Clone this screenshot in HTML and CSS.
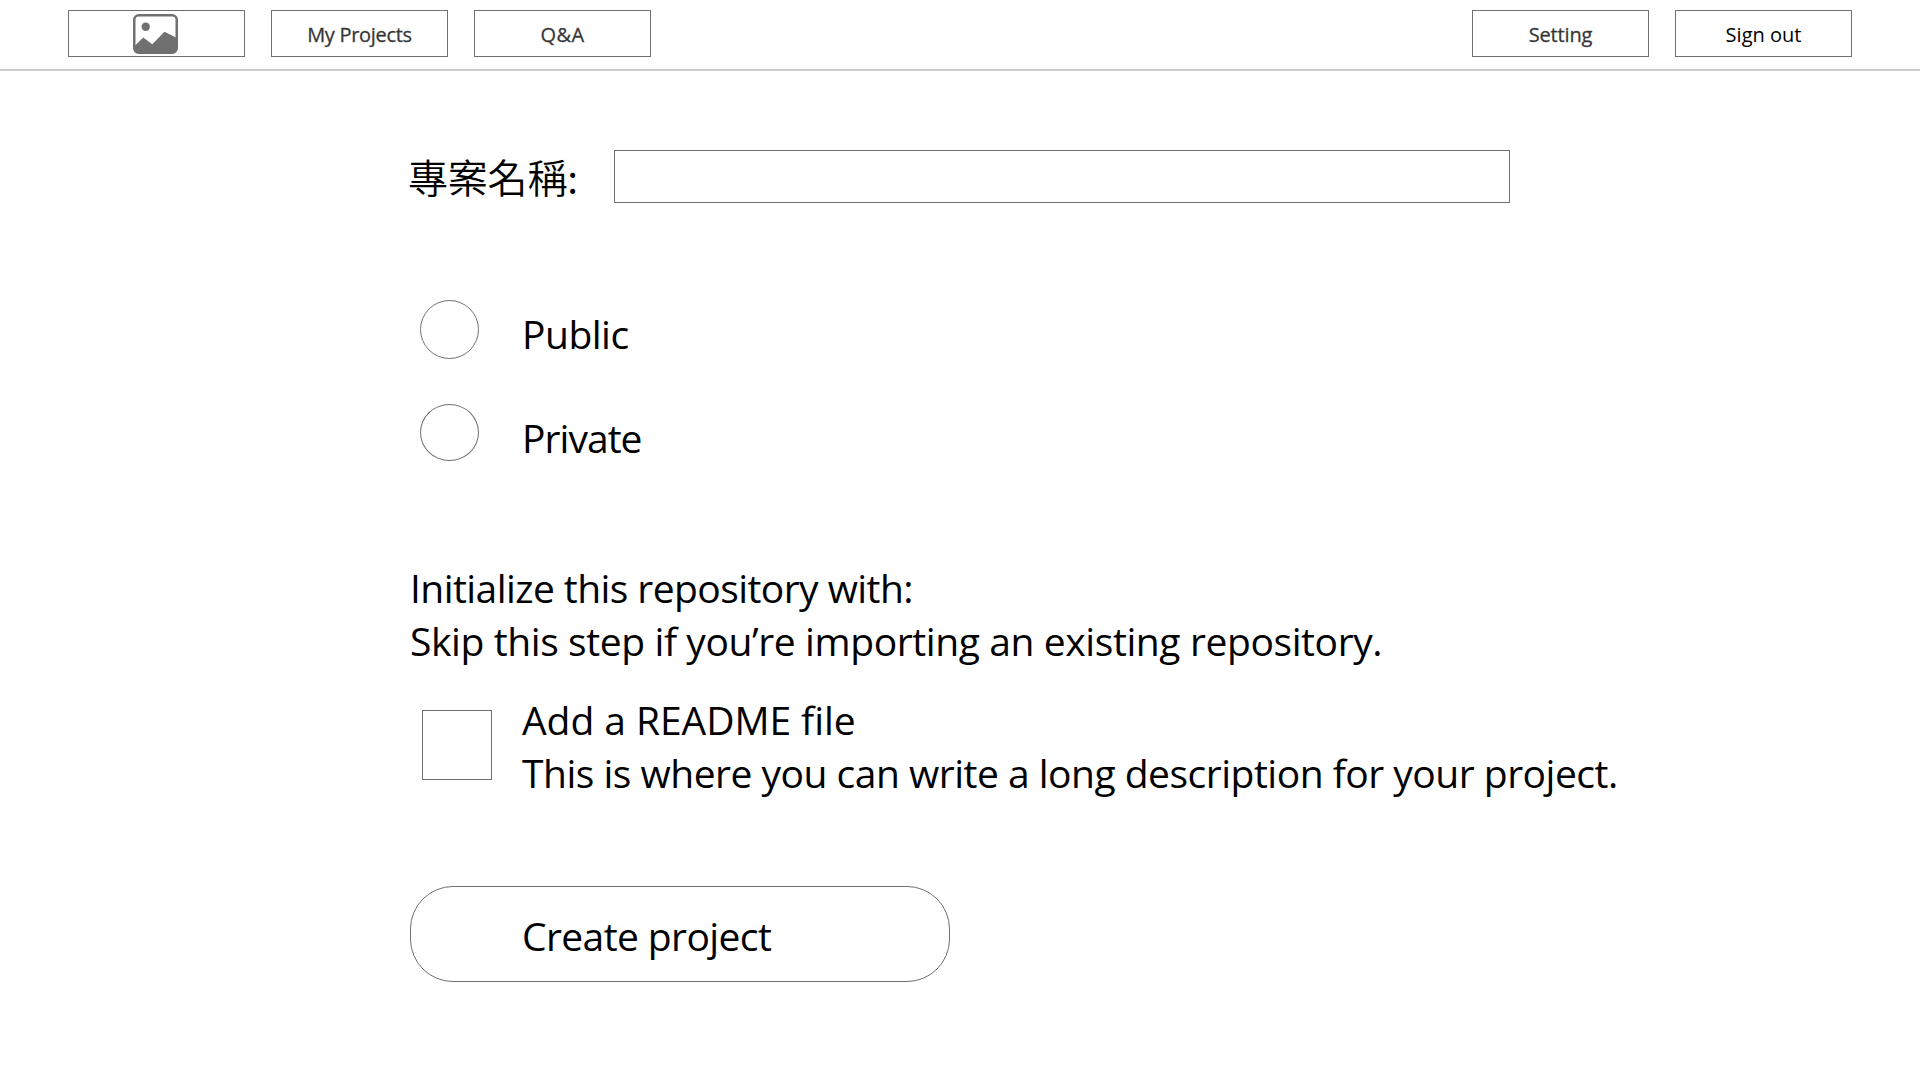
FILE: index.html
```html
<!DOCTYPE html>
<html lang="zh-Hant">
<head>
<meta charset="utf-8">
<title>Create project</title>
<link rel="stylesheet" href="styles.css">
</head>
<body>
<header class="topbar">
  <nav class="nav-group">
    <a class="nav-box logo" aria-label="Home">
      <svg class="picture-icon" viewBox="0 0 45 40" width="45" height="40">
        <rect x="1.25" y="1.25" width="42.5" height="37.5" rx="4.5" fill="none" stroke="#707070" stroke-width="2.5"/>
        <circle cx="12.7" cy="12.8" r="4.2" fill="#707070"/>
        <path d="M2 31.5L10.3 23.5L19.3 30.2L31.5 17.8L43 23.5V35Q43 39 39 39H6Q2 39 2 35Z" fill="#707070"/>
      </svg>
    </a>
    <a class="nav-box"><span class="t-projects">My Projects</span></a>
    <a class="nav-box"><span class="t-qa">Q&amp;A</span></a>
  </nav>
  <nav class="nav-group">
    <a class="nav-box"><span class="t-setting">Setting</span></a>
    <a class="nav-box light"><span class="t-signout">Sign out</span></a>
  </nav>
</header>
<main class="form">
  <div class="name-row">
    <label class="name-label" for="name">專案名稱:</label>
    <input class="name-input" id="name" type="text">
  </div>
  <div class="choices">
    <label class="choice"><span class="radio"></span><span class="choice-text t-public">Public</span></label>
    <label class="choice"><span class="radio short"></span><span class="choice-text t-private">Private</span></label>
  </div>
  <section class="init">
    <p class="line t-init">Initialize this repository with:</p>
    <p class="line t-skip">Skip this step if you’re importing an existing repository.</p>
  </section>
  <div class="readme">
    <span class="checkbox"></span>
    <div class="readme-text">
      <p class="line t-add">Add a README file</p>
      <p class="line t-desc">This is where you can write a long description for your project.</p>
    </div>
  </div>
  <button class="create" type="button"><span class="t-create">Create project</span></button>
</main>
</body>
</html>
```
FILE: styles.css
```css
* { box-sizing: border-box; }

body {
  margin: 0;
  background: #fff;
  color: #000;
  font-family: "Open Sans", "Noto Sans CJK TC", sans-serif;
  font-size: 39px;
  line-height: 53px;
}

.topbar {
  display: flex;
  justify-content: space-between;
  height: 71px;
  padding: 10px 68px;
  border-bottom: 2px solid #ccc;
}

.nav-group { display: flex; gap: 26px; }

.nav-box {
  display: flex;
  align-items: center;
  justify-content: center;
  width: 177px;
  height: 47px;
  padding-top: 2px;
  border: 1px solid #707070;
  color: #333;
  font-size: 20px;
  line-height: 26px;
  -webkit-text-stroke: 0.3px #444;
}

.nav-box.light {
  color: #000;
  -webkit-text-stroke: 0;
}

.nav-box.logo { padding: 0 2px 0 0; }
.picture-icon { display: block; }

.form { padding: 79px 0 0 410px; }
.name-row { display: flex; height: 53px; }

.name-label {
  width: 206px;
  margin-left: -2px;
  font-family: "Noto Sans CJK TC", sans-serif;
  font-weight: 350;
  font-size: 40px;
  line-height: 52px;
  letter-spacing: -0.2px;
  white-space: nowrap;
}

.name-input {
  width: 896px;
  height: 53px;
  padding: 0 12px;
  border: 1px solid #707070;
  background: #fff;
  font: inherit;
}

.choices {
  display: grid;
  grid-template-rows: 104px 104px;
  margin-top: 97px;
  padding-left: 10px;
}

.choice { display: flex; align-items: flex-start; }

.radio {
  width: 59px;
  height: 59px;
  border: 1px solid #707070;
  border-radius: 50%;
}

.radio.short { height: 57px; }
.choice-text { margin: 7px 0 0 43px; }

.line { margin: 0; white-space: nowrap; }
.init { margin-top: 53px; }

.readme {
  display: flex;
  gap: 30px;
  margin-top: 26px;
  padding-left: 12px;
}

.checkbox {
  width: 70px;
  height: 70px;
  margin-top: 17px;
  border: 1px solid #707070;
}

.create {
  display: block;
  width: 540px;
  height: 96px;
  margin-top: 87px;
  padding: 3px 0 0 111px;
  border: 1px solid #707070;
  border-radius: 43px;
  background: #fff;
  color: #000;
  font: inherit;
  text-align: left;
}

/* Tracking per label */
.t-projects { letter-spacing: -0.3px; }
.t-qa { letter-spacing: 0.4px; }
.t-setting { letter-spacing: -0.15px; }
.t-public { letter-spacing: -0.5px; }
.t-private { letter-spacing: -0.95px; }
.t-init { letter-spacing: -0.57px; }
.t-skip { letter-spacing: -0.4px; }
.t-add { letter-spacing: -0.06px; }
.t-desc { letter-spacing: -0.5px; }
.t-create { letter-spacing: -0.6px; }
```
